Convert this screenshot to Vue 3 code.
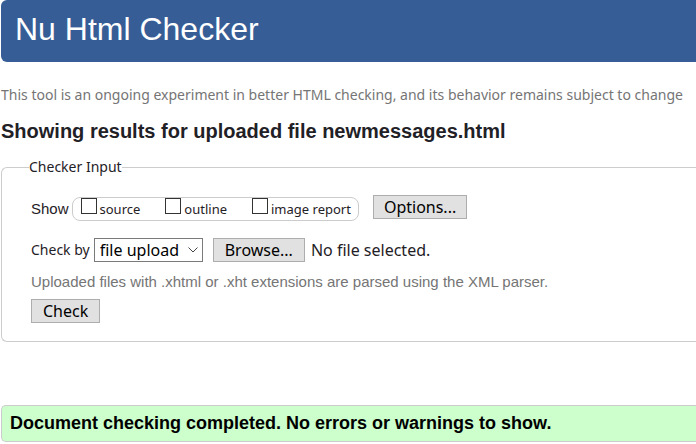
<script setup>
import { ref } from 'vue'

const options = ref([
  { id: 'source', label: 'source', checked: false },
  { id: 'outline', label: 'outline', checked: false },
  { id: 'image-report', label: 'image report', checked: false }
])
const method = ref('file upload')
const fileInput = ref(null)
const fileName = ref('No file selected.')

function pickFile(event) {
  const file = event.target.files[0]
  fileName.value = file ? file.name : 'No file selected.'
}
</script>

<template>
  <div class="page">
    <header class="banner">
      <h1>Nu Html Checker</h1>
    </header>
    <p class="intro">This tool is an ongoing experiment in better HTML checking, and its behavior remains subject to change</p>
    <h2>Showing results for uploaded file newmessages.html</h2>

    <form @submit.prevent>
      <fieldset class="checker">
        <legend>Checker Input</legend>
        <div class="row show-row">
          <span class="show-label">Show</span>
          <div class="options">
            <label v-for="option in options" :key="option.id" :for="option.id">
              <input :id="option.id" v-model="option.checked" type="checkbox">
              <span>{{ option.label }}</span>
            </label>
          </div>
          <button class="more" type="button">Options...</button>
        </div>
        <div class="row method-row">
          <label for="method">Check by</label>
          <span class="select-wrap">
            <select id="method" v-model="method">
              <option>file upload</option>
              <option>address</option>
              <option>text input</option>
            </select>
            <svg class="chevron" viewBox="0 0 10 6" aria-hidden="true">
              <path d="M0.5 0.5 5 5 9.5 0.5" fill="none" stroke="#444" stroke-width="1" />
            </svg>
          </span>
          <button class="browse" type="button" @click="fileInput.click()">Browse...</button>
          <input ref="fileInput" type="file" hidden @change="pickFile">
          <span class="file-name">{{ fileName }}</span>
        </div>
        <p class="hint">Uploaded files with .xhtml or .xht extensions are parsed using the XML parser.</p>
        <button class="submit" type="submit">Check</button>
      </fieldset>
    </form>

    <p class="success">Document checking completed. No errors or warnings to show.</p>
  </div>
</template>

<style>
body {
  background: #fff;
}
</style>

<style scoped>
.page {
  padding-left: 1px;
  overflow: hidden;
  color: #1f2126;
  font: 14px/20px "Noto Sans", sans-serif;
}

.banner {
  padding: 10px 14px 14px;
  border-radius: 6px 0 0 6px;
  background: #365d95;
  color: #fff;
}

h1 {
  margin: 0;
  font: 32px/38px "Liberation Sans", Arial, sans-serif;
}

.intro {
  margin: 23px 0 0;
  color: #757575;
  white-space: nowrap;
}

h2 {
  margin: 14px 0 0;
  font: bold 20px/24px "Liberation Sans", Arial, sans-serif;
}

.checker {
  min-width: 0;
  margin: 14px 0 0;
  padding: 18px 0 18px 29px;
  border: 1px solid #ccc;
  border-right: 0;
  border-radius: 6px 0 0 6px;
}

legend {
  margin-left: -2px;
  padding: 0;
}

.row {
  display: flex;
  align-items: center;
}

.show-row {
  align-items: flex-end;
  gap: 3px;
  height: 26px;
}

.show-label {
  font: 15px/24px "Liberation Sans", Arial, sans-serif;
}

.options {
  display: flex;
  gap: 25px;
  box-sizing: border-box;
  height: 24px;
  margin-right: 11px;
  padding: 0 7px 0 8px;
  border: 1px solid #ccc;
  border-radius: 8px;
  font-size: 13px;
}

.options label {
  display: flex;
  gap: 3px;
  line-height: 22px;
}

input[type="checkbox"] {
  appearance: none;
  box-sizing: border-box;
  width: 16px;
  height: 16px;
  margin: 0;
  border: 1px solid #333;
  background: #fff;
}

input[type="checkbox"]:checked {
  background: #365d95;
}

button,
select {
  box-sizing: border-box;
  height: 24px;
  margin: 0;
  border: 1px solid #adadad;
  border-radius: 0;
  background: #e1e1e1;
  color: #000;
  font: 16px/22px "Noto Sans", sans-serif;
}

button {
  padding: 0 11px;
}

.more {
  align-self: flex-start;
  padding: 0 10px;
}

.method-row {
  gap: 4px;
  margin-top: 17px;
}

.select-wrap {
  display: grid;
  align-items: center;
}

select {
  grid-area: 1 / 1;
  appearance: none;
  padding: 0 22px 0 5px;
  border-color: #7a7a7a;
  background: #fff;
}

.chevron {
  grid-area: 1 / 1;
  justify-self: end;
  width: 10px;
  height: 6px;
  margin-right: 5px;
  pointer-events: none;
}

.browse {
  margin: 0 2px 0 6px;
}

.file-name {
  font-size: 16px;
}

.hint {
  margin: 10px 0 7px;
  color: #757575;
  font: 15px/20px "Liberation Sans", Arial, sans-serif;
}

.submit {
  display: block;
}

.success {
  margin: 63px 0 0;
  padding: 6px 8px;
  border: 1px solid #ccc;
  border-right: 0;
  border-radius: 5px 0 0 5px;
  background: #cfc;
  color: #000;
  font: bold 18px/23px "Liberation Sans", Arial, sans-serif;
}
</style>
